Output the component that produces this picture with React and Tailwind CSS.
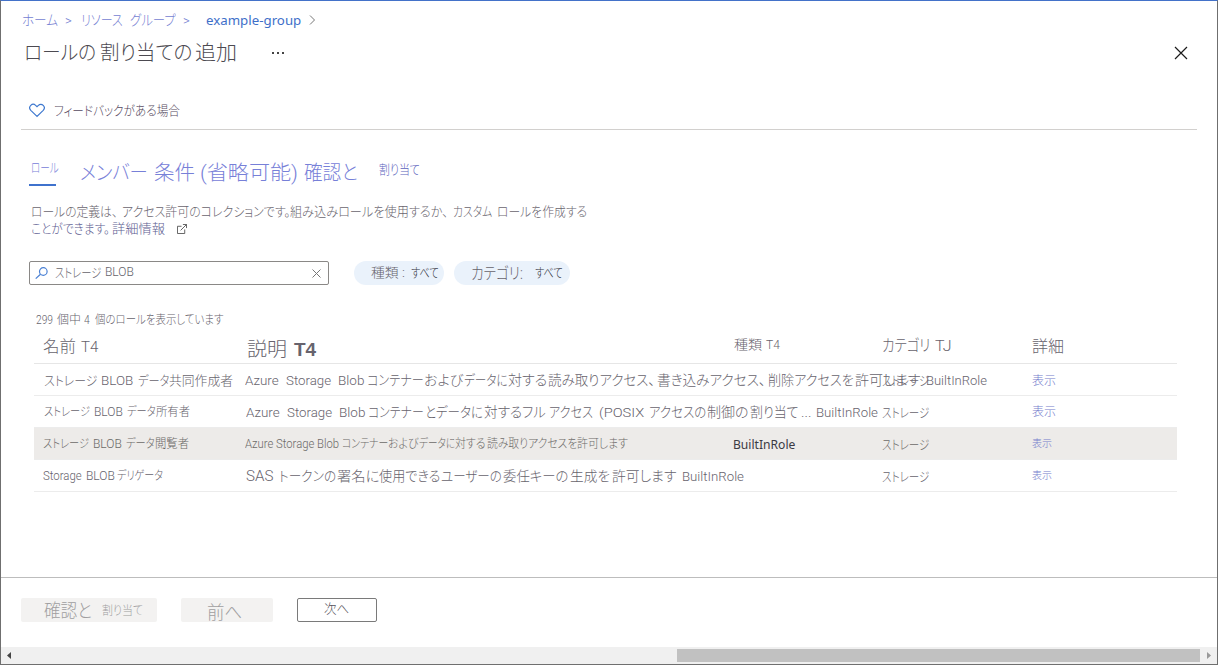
import { useLayoutEffect, useRef, useState } from "react";

// A run of text that is condensed or expanded to fill the width of its box.
function Run({ className = "", children }) {
  const box = useRef(null);
  const inner = useRef(null);
  const [scale, setScale] = useState(1);
  useLayoutEffect(() => {
    const natural = inner.current.offsetWidth;
    if (natural) setScale(box.current.clientWidth / natural);
  }, [children]);
  return (
    <span ref={box} className={`block flex-none leading-none whitespace-nowrap ${className}`}>
      <span
        ref={inner}
        className="inline-block origin-left align-top [font-feature-settings:'palt']"
        style={{ transform: `scaleX(${scale})` }}
      >
        {children}
      </span>
    </span>
  );
}

const columns = "grid grid-cols-[211px_488px_149px_150px_1fr] items-center";

function Row({ className = "", name, description, type, category, action }) {
  return (
    <div className={`${columns} h-8 border-b border-[#ececec] pt-px ${className}`}>
      <div className="flex items-center">{name}</div>
      <div className="flex items-center">{description}</div>
      <div className="flex items-center pt-px">{type}</div>
      <div className="flex items-center">{category}</div>
      <div className="flex items-center text-[#757dcc]">{action}</div>
    </div>
  );
}

function Breadcrumb() {
  return (
    <nav className="flex h-[38px] items-center pl-[21px] text-[#747ed2]">
      <Run className="w-[36px] text-[14px]">ホーム</Run>
      <Run className="ml-[7px] w-[7px] text-[13px]">&gt;</Run>
      <Run className="ml-[9px] w-[42px] text-[14px]">リソース</Run>
      <Run className="ml-[7px] w-[46px] text-[14px]">グループ</Run>
      <Run className="ml-[7px] w-[7px] text-[13px]">&gt;</Run>
      <Run className="ml-[16px] w-[95px] font-['Noto_Sans','Noto_Sans_CJK_JP',sans-serif] text-[13px] font-normal text-[#3e6fc9]">
        example-group
      </Run>
      <svg className="ml-[8px] h-[10px] w-[7px]" viewBox="0 0 7 10" fill="none" stroke="#777" strokeWidth="1">
        <path d="M1 .5 5.5 5 1 9.5" />
      </svg>
    </nav>
  );
}

function Header() {
  return (
    <header className="flex h-[28px] items-center pr-[29px] pl-[23px] text-[#4c4a51]">
      <Run className="w-[72px] text-[20px]">ロールの</Run>
      <Run className="ml-[4px] w-[92px] text-[20px]">割り当ての</Run>
      <Run className="ml-[3px] w-[42px] text-[20px]">追加</Run>
      <svg className="ml-[35px] h-[2px] w-[12px]" viewBox="0 0 12 2" fill="#444">
        <path d="M0 0h2v2H0zM5 0h2v2H5zM10 0h2v2h-2z" />
      </svg>
      <svg className="ml-auto h-[14px] w-[14px]" viewBox="0 0 14 14" fill="none" stroke="#1b1b1b" strokeWidth="1.2">
        <path d="m1 1 12 12M13 1 1 13" />
      </svg>
    </header>
  );
}

function Feedback() {
  return (
    <div className="mr-5 ml-5 flex h-[63px] items-center border-b border-[#d2d0ce] pt-[25px] pl-[8px] text-[#564a60]">
      <svg className="h-[15px] w-[16px]" viewBox="0 0 17 15" fill="none" stroke="#3e78cf" strokeWidth="1.25">
        <path d="M8.5 13.8 1.9 7.3C.4 5.7.5 3.4 1.9 2 3.4.5 5.6.6 7 2l1.5 1.5L10 2c1.4-1.4 3.6-1.5 5.1 0 1.4 1.4 1.5 3.7 0 5.3z" />
      </svg>
      <Run className="ml-[9px] w-[126px] text-[13px]">フィードバックがある場合</Run>
    </div>
  );
}

function Tabs() {
  return (
    <div className="flex h-[56px] items-start pl-[28px] text-[#7780d8]">
      <div className="flex h-[56px] w-[27px] flex-none flex-col border-b-2 border-[#3f72cd] pt-[31px] pl-[2px]">
        <Run className="w-[28px] text-[13px]">ロール</Run>
      </div>
      <Run className="mt-[33px] ml-[24px] w-[68px] text-[20px]">メンバー</Run>
      <Run className="mt-[33px] ml-[6px] w-[41px] text-[20px]">条件</Run>
      <Run className="mt-[33px] ml-[5px] w-[98px] text-[20px]">(省略可能)</Run>
      <Run className="mt-[33px] ml-[6px] w-[54px] text-[20px]">確認と</Run>
      <Run className="mt-[33px] ml-[21px] w-[41px] text-[13px] text-[#5a62bc]">割り当て</Run>
    </div>
  );
}

function Description() {
  return (
    <div className="flex flex-col gap-[4px] pt-[19px] pl-[30px] text-[#69646e]">
      <div className="flex h-[13px] items-center">
        <Run className="w-[87px] text-[13px]">ロールの定義は、</Run>
        <Run className="ml-[4px] w-[168px] text-[13px]">アクセス許可のコレクションです。</Run>
        <Run className="w-[158px] text-[13px]">組み込みロールを使用するか、</Run>
        <Run className="ml-[5px] w-[39px] text-[13px]">カスタム</Run>
        <Run className="ml-[5px] w-[90px] text-[13px]">ロールを作成する</Run>
      </div>
      <div className="flex h-[13px] items-center">
        <Run className="w-[79px] text-[13px] text-[#606092]">ことができます。</Run>
        <Run className="ml-[2px] w-[53px] text-[13px] text-[#606092]">詳細情報</Run>
        <svg className="ml-[12px] h-[10px] w-[10px]" viewBox="0 0 11 11" fill="none" stroke="#555" strokeWidth="1">
          <path d="M5 2.5H.5v8h8V6M6.5.5h4v4M10.5.5 4 7" />
        </svg>
      </div>
    </div>
  );
}

function Filters() {
  return (
    <div className="mt-[26px] flex h-[24px] pl-[28px] text-[#66636b]">
      <div className="flex h-[24px] w-[300px] items-center rounded-[2px] border border-[#8a8886] pr-[7px] pl-[5px]">
        <svg className="h-[12px] w-[13px]" viewBox="0 0 13 12" fill="none" stroke="#4a80d4" strokeWidth="1.2">
          <circle cx="8.3" cy="4.5" r="3.8" />
          <path d="M5.5 7.2.7 11.6" />
        </svg>
        <Run className="mb-[2px] ml-[7px] w-[46px] text-[13px]">ストレージ</Run>
        <Run className="mb-[2px] ml-[4px] w-[29px] text-[12px]">BLOB</Run>
        <svg className="ml-auto h-[9px] w-[9px]" viewBox="0 0 9 9" fill="none" stroke="#777" strokeWidth="1">
          <path d="m.5.5 8 8M8.500.5l-8 8" />
        </svg>
      </div>
      <div className="ml-[25px] flex h-[24px] w-[90px] items-center rounded-full bg-[#eaf2fb] pb-[2px] pl-[17px]">
        <Run className="w-[34px] text-[13px]">種類 :</Run>
        <Run className="ml-[6px] w-[28px] text-[13px] text-[#33353f]">すべて</Run>
      </div>
      <div className="ml-[10px] flex h-[24px] w-[116px] items-center rounded-full bg-[#eaf2fb] pl-[17px]">
        <Run className="mt-[2px] w-[52px] text-[16px]">カテゴリ:</Run>
        <Run className="mb-[1px] ml-[12px] w-[28px] text-[13px] text-[#33353f]">すべて</Run>
      </div>
    </div>
  );
}

function RolesTable() {
  const storage = <Run className="w-[47px] text-[13px]">ストレージ</Run>;
  return (
    <div className="mr-[40px] ml-[33px] text-[#67636d]">
      <div className="flex h-[13px] items-center pt-px pl-[2px] text-[12px]">
        <Run className="w-[17px]">299</Run>
        <Run className="ml-[4px] w-[24px]">個中</Run>
        <Run className="ml-[3px] w-[6px]">4</Run>
        <Run className="ml-[5px] w-[128px]">個のロールを表示しています</Run>
      </div>
      <div className={`${columns} h-[38px] border-b border-[#e6e6e6]`}>
        <div className="flex items-center pt-[5px] pl-[9px]">
          <Run className="w-[33px] text-[16px]">名前</Run>
          <Run className="ml-[5px] w-[17px] text-[15px]">T4</Run>
        </div>
        <div className="flex items-center pt-[9px] pl-[2px]">
          <Run className="w-[40px] text-[19px]">説明</Run>
          <Run className="ml-[7px] w-[22px] font-['Liberation_Sans',sans-serif] text-[19px] font-bold">T4</Run>
        </div>
        <div className="flex items-center pl-[1px]">
          <Run className="w-[28px] text-[13px]">種類</Run>
          <Run className="ml-[4px] w-[14px] text-[12px]">T4</Run>
        </div>
        <div className="flex items-center pt-[3px]">
          <Run className="w-[48px] text-[16px]">カテゴリ</Run>
          <Run className="ml-[5px] w-[16px] text-[15px]">TJ</Run>
        </div>
        <div className="flex items-center pt-[5px]">
          <Run className="w-[32px] text-[16px]">詳細</Run>
        </div>
      </div>
      <Row
        name={
          <>
            <Run className="ml-[10px] w-[53px] text-[13px]">ストレージ</Run>
            <Run className="ml-[4px] w-[32px] text-[13px]">BLOB</Run>
            <Run className="ml-[5px] w-[31px] text-[13px]">データ</Run>
            <Run className="w-[64px] text-[13px]">共同作成者</Run>
          </>
        }
        description={
          <>
            <Run className="w-[34px] text-[13px]">Azure</Run>
            <Run className="ml-[7px] w-[45px] text-[13px]">Storage</Run>
            <Run className="ml-[7px] w-[26px] text-[13px]">Blob</Run>
            <Run className="ml-[3px] w-[57px] text-[14px]">コンテナー</Run>
            <Run className="w-[39px] text-[14px]">および</Run>
            <Run className="ml-[1px] w-[44px] text-[14px]">データに</Run>
            <Run className="w-[39px] text-[14px]">対する</Run>
            <Run className="ml-[1px] w-[107px] text-[14px]">読み取りアクセス、</Run>
            <Run className="ml-[2px] w-[109px] text-[14px]">書き込みアクセス、</Run>
            <Run className="ml-[2px] w-[86px] text-[14px]">削除アクセスを</Run>
            <Run className="ml-[1px] w-[65px] text-[14px]">許可します</Run>
            <Run className="ml-[6px] w-[61px] text-[13px]">BuiltInRole</Run>
          </>
        }
        category={storage}
        action={<Run className="mt-px w-[24px] text-[12px]">表示</Run>}
      />
      <Row
        name={
          <>
            <Run className="ml-[10px] w-[46px] text-[12px]">ストレージ</Run>
            <Run className="ml-[4px] w-[29px] text-[12px]">BLOB</Run>
            <Run className="ml-[4px] w-[29px] text-[12px]">データ</Run>
            <Run className="w-[34px] text-[12px]">所有者</Run>
          </>
        }
        description={
          <>
            <Run className="ml-[1px] w-[34px] text-[13px]">Azure</Run>
            <Run className="ml-[7px] w-[45px] text-[13px]">Storage</Run>
            <Run className="ml-[7px] w-[26px] text-[13px]">Blob</Run>
            <Run className="ml-[3px] w-[56px] text-[14px]">コンテナー</Run>
            <Run className="ml-[1px] w-[58px] text-[14px]">とデータに</Run>
            <Run className="ml-[1px] w-[38px] text-[14px]">対する</Run>
            <Run className="w-[24px] text-[14px]">フル</Run>
            <Run className="ml-[3px] w-[44px] text-[14px]">アクセス</Run>
            <Run className="ml-[6px] w-[45px] text-[13px]">(POSIX</Run>
            <Run className="ml-[5px] w-[57px] text-[14px]">アクセスの</Run>
            <Run className="ml-[1px] w-[42px] text-[14px]">制御の</Run>
            <Run className="ml-[1px] w-[49px] text-[14px]">割り当て</Run>
            <Run className="ml-[2px] w-[10px] text-[13px]">...</Run>
            <Run className="ml-[5px] w-[62px] text-[13px]">BuiltInRole</Run>
          </>
        }
        category={storage}
        action={<Run className="w-[24px] text-[12px]">表示</Run>}
      />
      <Row
        className="bg-[#edebe9] text-[#6c6a68]"
        name={
          <>
            <Run className="ml-[9px] w-[46px] text-[12px]">ストレージ</Run>
            <Run className="ml-[4px] w-[29px] text-[12px]">BLOB</Run>
            <Run className="ml-[4px] w-[29px] text-[12px]">データ</Run>
            <Run className="w-[34px] text-[12px]">閲覧者</Run>
          </>
        }
        description={
          <>
            <Run className="w-[94px] text-[12px]">Azure Storage Blob</Run>
            <Run className="ml-[3px] w-[46px] text-[12px]">コンテナー</Run>
            <Run className="w-[31px] text-[12px]">および</Run>
            <Run className="w-[36px] text-[12px]">データに</Run>
            <Run className="w-[31px] text-[12px]">対する</Run>
            <Run className="ml-[1px] w-[90px] text-[12px]">読み取りアクセスを</Run>
            <Run className="w-[51px] text-[12px]">許可します</Run>
          </>
        }
        type={
          <Run className="mt-px w-[62px] font-['Noto_Sans',sans-serif] text-[12.5px] font-normal text-[#3b3a43]">
            BuiltInRole
          </Run>
        }
        category={storage}
        action={<Run className="mb-px w-[20px] text-[10px]">表示</Run>}
      />
      <Row
        name={
          <>
            <Run className="ml-[9px] w-[39px] text-[12px]">Storage</Run>
            <Run className="ml-[4px] w-[29px] text-[12px]">BLOB</Run>
            <Run className="ml-[2px] w-[46px] text-[12px]">デリゲータ</Run>
          </>
        }
        description={
          <>
            <Run className="ml-[1px] w-[27px] text-[14px]">SAS</Run>
            <Run className="ml-[6px] w-[57px] text-[14px]">トークンの</Run>
            <Run className="ml-[1px] w-[42px] text-[14px]">署名に</Run>
            <Run className="w-[61px] text-[14px]">使用できる</Run>
            <Run className="ml-[1px] w-[61px] text-[14px]">ユーザーの</Run>
            <Run className="ml-[1px] w-[65px] text-[14px]">委任キーの</Run>
            <Run className="ml-[2px] w-[40px] text-[14px]">生成を</Run>
            <Run className="ml-[2px] w-[64px] text-[14px]">許可します</Run>
            <Run className="ml-[6px] w-[62px] text-[13px]">BuiltInRole</Run>
          </>
        }
        category={storage}
        action={<Run className="w-[20px] text-[10px]">表示</Run>}
      />
    </div>
  );
}

function Footer() {
  return (
    <div className="flex h-[70px] items-start border-t border-[#bdbdbd] pt-[20px] pl-[20px]">
      <button className="flex h-[24px] w-[136px] items-center rounded-[2px] bg-[#f3f2f1] pt-px pl-[23px] text-[#a09ea0]">
        <Run className="w-[48px] text-[18px]">確認と</Run>
        <Run className="ml-[10px] w-[41px] text-[12px]">割り当て</Run>
      </button>
      <button className="ml-[24px] flex h-[24px] w-[92px] items-center rounded-[2px] bg-[#f3f2f1] pt-[5px] pl-[26px] text-[#a09ea0]">
        <Run className="w-[35px] text-[18px]">前へ</Run>
      </button>
      <button className="ml-[24px] flex h-[24px] w-[80px] items-center rounded-[2px] border border-[#7a7a7a] pb-[3px] pl-[26px] text-[#55535a]">
        <Run className="w-[25px] text-[13px]">次へ</Run>
      </button>
    </div>
  );
}

function Scrollbar() {
  return (
    <div className="flex h-[17px] items-center bg-[#f0f0f0] pr-[6px] pl-[6px]">
      <svg className="h-[7px] w-[4px]" viewBox="0 0 4 7" fill="#444">
        <path d="M4 0v7L0 3.500z" />
      </svg>
      <div className="ml-auto h-[13px] w-[523px] bg-[#c1c1c1]" />
      <svg className="ml-[7px] h-[7px] w-[4px]" viewBox="0 0 4 7" fill="#999">
        <path d="M0 0v7l4-3.500z" />
      </svg>
    </div>
  );
}

export default function App() {
  return (
    <div className="flex h-[665px] w-[1218px] flex-col overflow-hidden border border-[#6f6f6f] border-t-[#4372c9] bg-white font-['Roboto','Noto_Sans_CJK_JP',sans-serif] font-light">
      <Breadcrumb />
      <Header />
      <Feedback />
      <Tabs />
      <Description />
      <Filters />
      <div className="flex-1 pt-[28px]">
        <RolesTable />
      </div>
      <Footer />
      <Scrollbar />
    </div>
  );
}
